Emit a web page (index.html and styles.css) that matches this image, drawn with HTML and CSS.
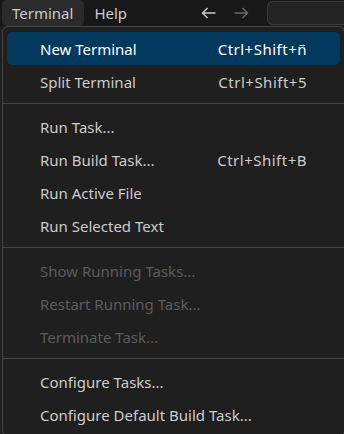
FILE: index.html
```html
<!DOCTYPE html>
<html lang="en">
<head>
    <meta charset="UTF-8">
    <meta name="viewport" content="width=device-width, initial-scale=1.0">
    <title>Terminal menu</title>
    <link rel="stylesheet" href="styles.css">
</head>
<body>
    <div class="titlebar">
        <div class="menubar-item open">Terminal</div>
        <div class="menubar-item">Help</div>
        <div class="nav">
            <svg class="arrow" width="16" height="16" viewBox="0 0 16 16">
                <path d="M1.5 8h13M6.5 3 1.5 8l5 5" />
            </svg>
            <svg class="arrow disabled" width="16" height="16" viewBox="0 0 16 16">
                <path d="M1.5 8h13M9.5 3l5 5-5 5" />
            </svg>
        </div>
        <div class="search"></div>
    </div>

    <div class="menu">
        <div class="item active"><span>New Terminal</span><span class="keys">Ctrl+Shift+ñ</span></div>
        <div class="item"><span>Split Terminal</span><span class="keys">Ctrl+Shift+5</span></div>
        <div class="separator"></div>
        <div class="item"><span>Run Task...</span></div>
        <div class="item"><span>Run Build Task...</span><span class="keys">Ctrl+Shift+B</span></div>
        <div class="item"><span>Run Active File</span></div>
        <div class="item"><span>Run Selected Text</span></div>
        <div class="separator"></div>
        <div class="item disabled"><span>Show Running Tasks...</span></div>
        <div class="item disabled"><span>Restart Running Task...</span></div>
        <div class="item disabled"><span>Terminate Task...</span></div>
        <div class="separator"></div>
        <div class="item"><span>Configure Tasks...</span></div>
        <div class="item"><span>Configure Default Build Task...</span></div>
    </div>
</body>
</html>
```

FILE: styles.css
```css
body {
    margin: 0;
    background: #1f1f1f;
    font-family: 'Segoe UI', 'Noto Sans', sans-serif;
    font-size: 15px;
    color: #cccccc;
    overflow: hidden;
}
.titlebar {
    display: flex;
    height: 26px;
    background: #181818;
}
.menubar-item {
    display: flex;
    align-items: center;
    padding: 0 10px;
    margin-left: 2px;
    border-radius: 5px;
    margin-right: -2px;
}
.menubar-item.open {
    padding: 0 11px 0 10px;
    background: #2b2b2b;
}
.nav {
    display: flex;
    align-items: center;
    gap: 16px;
    margin-left: 66px;
}
.arrow {
    fill: none;
    stroke: #cccccc;
    stroke-width: 1.4;
}
.arrow.disabled {
    stroke: #6b6b6b;
}
.search {
    flex: 1;
    margin: 1px 0 1px 18px;
    border: 1px solid #3a3a3a;
    border-right: none;
    border-radius: 6px 0 0 6px;
    background: #242424;
}
.menu {
    width: 333px;
    margin-left: 2px;
    padding: 5px 4px;
    background: #1f1f1f;
    border: 1px solid #454545;
    border-radius: 6px;
}
.item {
    display: flex;
    justify-content: space-between;
    align-items: center;
    height: 33px;
    padding: 0 33px;
    border-radius: 5px;
}
.keys {
    letter-spacing: 0.5px;
}
.item.active {
    background: #04395e;
    color: #ffffff;
}
.item.disabled {
    color: #5c5c5c;
}
.separator {
    height: 1px;
    margin: 5px -4px 6px;
    background: #454545;
}
```
